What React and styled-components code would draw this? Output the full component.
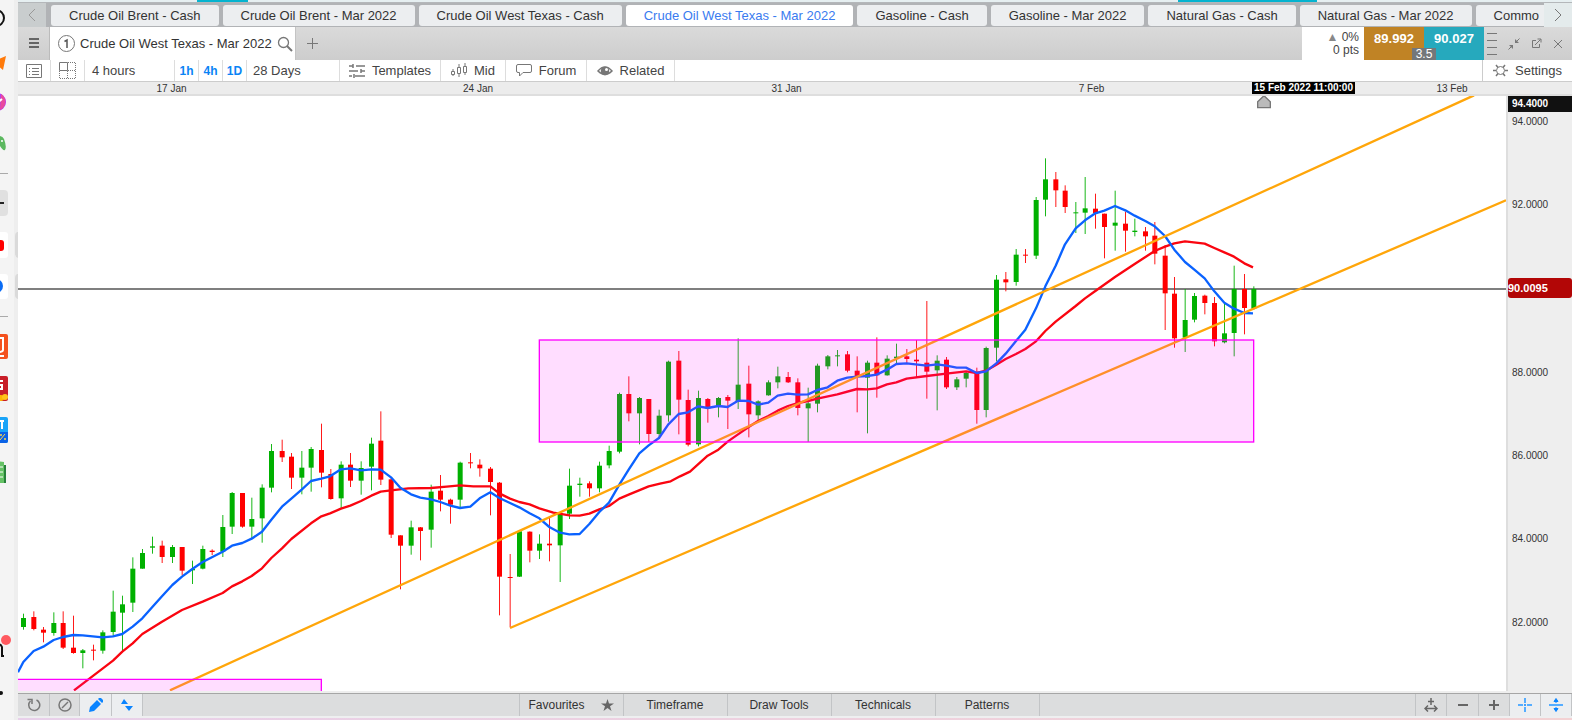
import React from "react";
import styled, { createGlobalStyle } from "styled-components";

const Global = createGlobalStyle`
  * { box-sizing: border-box; }
  body { margin: 0; background: #eeeeee; font-family: "Liberation Sans", Arial, sans-serif; font-size: 13px; color: #333; }
  button { font: inherit; color: inherit; border: 0; padding: 0; background: none; cursor: pointer; }
`;

const Page = styled.div`
  display: flex;
  min-height: 100vh;
  overflow: hidden;
`;

const Dock = styled.nav`
  flex: none;
  display: flex;
  flex-direction: column;
  width: 18px;
  background: #f4f4f4;
  border-right: 4px solid #eeeeee;
`;
const DockItem = styled.button`
  display: block;
  flex: none;
  width: 18px;
  height: ${(p) => p.$h}px;
  svg { display: block; overflow: visible; }
`;
const DockRule = styled.hr`
  flex: none;
  width: 8px;
  height: 1px;
  margin: 16px 0;
  border: 0;
  background: #aaa;
`;
const DockSpace = styled.div`
  flex: 1;
`;

const Main = styled.main`
  flex: 1;
  min-width: 0;
  display: flex;
  flex-direction: column;
`;
const TopStrip = styled.div`
  display: grid;
  grid-template-columns: 179fr 51fr 930fr 139fr 255fr;
  height: 3px;
  background: #e6eff1;
  border-bottom: 1px solid #b4b7ba;
`;
const Accent = styled.span`
  grid-column: ${(p) => p.$col};
  height: 2px;
  background: #05b3cf;
`;
const BottomStrip = styled.div`
  height: 2px;
  background: linear-gradient(90deg, #e8d0ea, #f3d2d4);
`;

const TabBar = styled.div`
  display: flex;
  height: 24px;
  background: #b1b3b6;
`;
const Scroll = styled.button`
  flex: none;
  display: grid;
  place-items: center;
  width: 28px;
  background: ${(p) => p.$bg};
`;
const Tabs = styled.div`
  flex: 1;
  min-width: 0;
  overflow: hidden;
  display: flex;
  gap: 4px;
  padding: 2px 0 1px 5px;
`;
const Tab = styled.button`
  flex: none;
  padding: 0 18px;
  border-radius: 3px;
  white-space: nowrap;
  color: ${(p) => (p.$active ? "#3a7bf0" : "#333")};
  background: ${(p) => (p.$active ? "#fff" : "#eceef0")};
`;

const TitleBar = styled.header`
  display: flex;
  height: 33px;
  background: linear-gradient(#dadada, #cdcdcd);
`;
const Menu = styled.button`
  display: grid;
  place-items: center;
  width: 32px;
  border-right: 1px solid #bbb;
`;
const ChartTab = styled.div`
  display: flex;
  align-items: center;
  gap: 5px;
  width: 246px;
  padding-left: 8px;
  background: #fff;
  border-right: 1px solid #c4c4c4;
  white-space: nowrap;
  svg { flex: none; }
`;
const AddTab = styled.button`
  display: grid;
  place-items: center;
  width: 32px;
`;
const Grow = styled.div`
  flex: 1;
`;
const Change = styled.div`
  width: 62px;
  padding: 4px 5px 0 0;
  background: #fff;
  font-size: 12px;
  line-height: 13px;
  text-align: right;
  color: #444;
`;
const Up = styled.span`
  color: #888;
`;
const Prices = styled.div`
  position: relative;
  display: flex;
`;
const Price = styled.button`
  width: 60px;
  padding-bottom: 10px;
  color: #fff;
  font-weight: bold;
  background: ${(p) => p.$bg};
`;
const Spread = styled.span`
  position: absolute;
  left: 50%;
  bottom: 0;
  width: 24px;
  margin-left: -12px;
  background: #73777a;
  color: #fff;
  font-size: 12px;
  line-height: 12px;
  text-align: center;
`;
const WindowTools = styled.div`
  display: flex;
  align-items: center;
  justify-content: space-between;
  width: 88px;
  padding: 0 9px 0 3px;
  button, svg { display: block; }
`;

const Toolbar = styled.div`
  display: flex;
  height: 22px;
  background: #fff;
  border-bottom: 1px solid #ccc;
`;
const Tool = styled.button`
  display: flex;
  align-items: center;
  justify-content: ${(p) => p.$justify || "center"};
  gap: 7px;
  width: ${(p) => p.$w}px;
  padding-left: ${(p) => p.$pad || 0}px;
  border-right: 1px solid #ddd;
  color: ${(p) => (p.$quick ? "#0a84f5" : "#444")};
  font-weight: ${(p) => (p.$quick ? "bold" : "normal")};
  font-size: ${(p) => (p.$quick ? 12 : 13)}px;
  white-space: nowrap;
  svg { flex: none; }
`;
const SettingsTool = styled(Tool)`
  border-right: 0;
  border-left: 1px solid #ccc;
`;

const DateAxis = styled.div`
  display: grid;
  grid-template-columns: 307fr 306fr 311fr 299fr 125fr 172fr 34fr;
  height: 14px;
  background: #ececec;
  border-bottom: 2px solid #dedede;
  font-size: 10px;
  line-height: 14px;
  text-align: center;
`;
const CursorDate = styled.span`
  justify-self: center;
  padding: 0 2px;
  background: #000;
  color: #fff;
  font-weight: bold;
  line-height: 11px;
  height: 12px;
  white-space: nowrap;
`;

const ChartRow = styled.div`
  flex: 1;
  display: flex;
  min-height: 594px;
  border-bottom: 2px solid #eee;
`;
const Plot = styled.div`
  position: relative;
  flex: 1;
  min-width: 0;
  background: #fff;
`;
const Drawing = styled.svg`
  position: absolute;
  inset: 0;
  width: 100%;
  height: 100%;
`;
const PriceAxis = styled.div`
  position: relative;
  width: 66px;
  border-left: 2px solid #dedede;
  background: #eee;
  font-size: 10px;
  color: #333;
`;
const Level = styled.span`
  position: absolute;
  left: 0;
  right: 0;
  top: ${(p) => p.$top}%;
  padding-left: 4px;
  line-height: 12px;
  transform: translateY(-50%);
`;
const Flag = styled(Level)`
  padding-left: ${(p) => p.$pad}px;
  border-radius: ${(p) => p.$radius || 0}px;
  background: ${(p) => p.$bg};
  color: #fff;
  font-weight: bold;
  font-size: ${(p) => p.$size}px;
  line-height: ${(p) => p.$h}px;
`;

const BottomBar = styled.footer`
  display: flex;
  height: 25px;
  background: #dcddde;
  border-top: 1px solid #a6a6a6;
  border-bottom: 2px solid #eeeff0;
`;
const BarButton = styled.button`
  display: flex;
  align-items: center;
  justify-content: center;
  gap: 16px;
  width: ${(p) => p.$w}px;
  border-right: 1px solid #c2c4c6;
  background: ${(p) => (p.$on ? "#eceef0" : "transparent")};
  font-size: 12px;
`;
const Panels = styled.div`
  display: flex;
  border-left: 1px solid #c2c4c6;
`;

/* Bars are [x, high, bodyTop, bodyBottom, low, rising]; each block has its own origin. */
const blocks = [
  { x: 0, y: 1200, bars: [
    [70,642,655,682,690,1],[101,635,652,688,692,0],[130,682,690,699,728,0],[161,638,670,700,708,1],[189,635,670,744,748,0],[220,648,744,760,762,0],[248,748,752,760,806,1],[280,735,750,753,782,0],[308,692,698,753,762,1],[339,573,636,697,708,1],[367,588,614,639,755,1],[398,473,507,609,637,1],[427,448,460,507,507,1],[457,411,440,444,462,1],[486,423,438,472,490,0],[517,436,442,472,490,1],[546,442,442,513,526,0],[577,483,508,512,553,1],[608,438,448,507,509,1],[636,449,453,457,466,0],[668,346,382,456,472,1],[696,277,280,381,403,1],[727,280,280,381,384,0],[755,294,358,381,416,1],[786,254,264,356,429,1],[814,133,154,264,278,1],[846,120,154,173,187,0],[874,160,171,234,268,0],[905,154,204,234,284,1],[933,142,148,204,276,1],[964,72,151,219,263,0],[992,208,223,298,300,0] ] },
  { x: 960, y: 1140, bars: [
    [63,245,255,356,386,1],[91,220,255,303,322,0],[123,245,265,303,345,1],[154,174,192,261,332,1],[182,95,183,300,316,0],[213,293,299,465,475,0],[241,467,467,498,629,0],[273,423,443,498,525,1],[301,442,443,454,542,0],[333,315,336,450,504,1],[361,286,333,360,395,0],[391,357,360,375,432,0],[420,246,249,360,386,1],[451,220,248,251,266,0],[479,239,255,266,291,0],[511,262,267,307,407,0],[538,307,309,591,707,0],[570,523,592,595,742,0],[598,455,455,591,592,1],[629,455,456,513,548,0],[658,464,492,513,538,1],[688,414,492,497,545,0],[720,400,402,497,607,1],[748,267,318,402,418,1],[779,294,312,316,351,1],[808,305,311,326,351,0],[838,246,258,326,338,1],[867,198,214,257,266,1] ] },
  { x: 1800, y: 900, bars: [
    [58,279,283,456,461,1],[86,230,283,341,365,0],[118,292,295,341,434,1],[146,298,298,403,427,0],[177,330,348,403,416,1],[205,183,186,347,366,1],[236,154,183,300,404,0],[264,270,301,435,440,0],[295,273,295,434,440,1],[323,295,298,326,369,0],[355,292,295,322,353,1],[383,286,292,303,388,0],[414,116,255,305,328,1],[446,198,252,344,413,0],[474,302,305,347,362,1],[505,242,248,287,288,1],[533,201,230,248,266,1],[564,217,232,248,250,0],[593,236,248,325,347,0],[624,264,311,326,427,1],[652,192,198,312,338,1],[683,166,170,200,209,1],[712,151,167,170,200,1],[742,154,164,213,218,0],[771,170,213,230,338,0],[802,183,189,234,401,1],[830,113,189,227,294,0],[861,167,177,227,228,1],[889,132,171,176,190,1],[920,148,170,178,190,0],[949,121,180,185,234,0],[980,4,189,216,297,0] ] },
  { x: 2700, y: 420, bars: [
    [111,647,663,692,812,1],[139,652,660,743,748,0],[170,712,719,743,751,1],[198,697,700,717,743,1],[230,684,700,811,852,0],[258,621,625,811,833,1],[289,406,420,624,665,1],[317,397,419,428,455,0],[348,328,345,427,438,1],[376,328,345,348,370,0],[408,172,181,348,358,1],[436,56,119,180,230,1],[467,97,119,152,202,0],[495,137,153,202,220,0],[527,187,218,221,280,1],[555,112,206,219,283,1],[586,162,207,220,267,0],[613,222,222,262,356,0],[645,153,249,258,333,1],[676,216,252,273,336,0],[704,237,273,277,290,1],[736,262,275,290,333,0],[764,247,288,342,374,0],[795,316,348,461,571,0],[823,412,462,596,624,0],[855,448,541,594,637,1],[883,460,469,540,548,1],[914,465,468,490,524,0],[943,472,490,605,620,0],[973,490,581,608,611,1],[1002,378,448,580,650,1],[1033,403,448,505,584,0],[1061,440,448,507,510,1] ] },
];

const fast = [
  [0, 1200, "54,818 70,787 101,754 130,741 161,721 189,712 220,706 248,707 308,713 339,710 367,703 398,681 427,656 457,622 486,590 517,556 546,531 577,508 608,487 668,456 696,438 727,430 755,417 786,396 814,360 846,321 874,297 905,270 933,244 964,237"],
  [960, 1140, "30,290 63,269 91,266 123,272 154,269 182,270 213,293 241,324 273,344 301,354 333,359 361,367 391,378 420,385 451,381 479,356 511,338 538,355 570,370 598,383 629,401 658,416 688,442 720,459 748,464 779,463 808,433 838,397 867,369 898,315"],
  [1800, 900, "86,510 118,461 146,437 177,415 205,374 236,343 264,338 295,320 323,325 355,319 383,322 414,303 446,304 474,315 505,309 533,288 564,282 593,285 624,284 652,271 683,263 712,243 742,234 771,231 802,229 830,225 861,210 889,193"],
  [2700, 420, "20,671 80,678 111,674 139,678 170,684 198,684 230,700 258,695 289,671 317,642 348,604 376,570 408,506 436,440 467,378 495,314 527,266 555,242 586,221 613,213 645,199 676,212 704,228 736,244 764,260 795,289 823,330 855,367 883,390 914,416 943,455 973,489 1002,507 1033,520 1059,521"],
];
const slow = [
  [0, 1200, "222,872 339,783 367,756 398,731 427,703 486,666 546,631 608,606 668,580 696,560 727,545 755,529 786,506 814,475 846,446 874,418 933,371 962,351"],
  [960, 1140, "30,401 63,387 91,378 123,364 154,348 182,336 213,332 265,326 333,325 380,321 420,317 460,320 511,320 538,341 570,357 598,367 629,374 658,386 700,399 748,407 779,408 808,402 838,389 867,379 898,357 926,345 957,332 986,320 1020,312"],
  [1800, 900, "212,545 240,530 270,516 323,468 355,450 383,426 414,404 446,382 474,364 505,349 533,333 564,319 593,310 624,304 652,297 712,284 771,268 802,269 830,266 861,254 889,248"],
  [2700, 420, "20,717 80,709 139,702 198,695 230,700 258,693 289,675 317,658 348,643 376,628 408,605 436,574 467,546 527,499 555,476 586,454 645,412 704,373 764,334 795,321 823,311 855,305 914,312 943,325 973,338 1002,351 1033,371 1059,383"],
];
const join = (parts) =>
  parts
    .flatMap(([ox, oy, pts]) => pts.split(" ").map((p) => p.split(",")).map(([x, y]) => `${+x + ox},${+y + oy}`))
    .join(" ");

function Chart() {
  return (
    <Drawing viewBox="54 289 4464 1785" preserveAspectRatio="none" role="img" aria-label="Crude Oil West Texas candlestick chart">
      <line x1="54" x2="4518" y1="868" y2="868" stroke="#555" strokeWidth="4" />
      {blocks.map((b) => (
        <g key={b.x} transform={`translate(${b.x} ${b.y})`}>
          {b.bars.map(([x, hi, top, bottom, lo, up]) => (
            <g key={x} fill={up ? "#00b000" : "#ff0000"}>
              <rect x={x - 1} y={hi} width="3" height={lo - hi} opacity="0.9" />
              <rect x={x - 7} y={top} width="15" height={bottom - top} />
            </g>
          ))}
        </g>
      ))}
      <g fill="none" strokeLinejoin="round">
        <polyline points={join(slow)} stroke="#fa0510" strokeWidth="7" />
        <polyline points={join(fast)} stroke="#0a62ff" strokeWidth="7" />
        <path d="M510 2072L4422 287M1530 1885L4518 602" stroke="#ffa60a" strokeWidth="7" />
      </g>
      <g fill="#f0f" fillOpacity="0.133" stroke="#f0f" strokeWidth="4">
        <rect x="1618" y="1021" width="2143" height="306" />
        <path d="M50 2039H964V2080H50Z" />
      </g>
      <path d="M3773 306L3792 288L3811 306V324H3773Z" fill="#bbb" stroke="#777" strokeWidth="4" />
    </Drawing>
  );
}

const Icon = ({ w = 16, h = 16, sw = 1, color = "#777", fill = "none", children }) => (
  <svg width={w} height={h} viewBox={`0 0 ${w} ${h}`} fill={fill} stroke={color} strokeWidth={sw} aria-hidden="true">
    {children}
  </svg>
);

function Sidebar() {
  return (
    <Dock>
      <DockItem $h={38} aria-label="Search"><svg width="18" height="38"><circle cx="-4" cy="18" r="8" fill="none" stroke="#111" strokeWidth="2" /></svg></DockItem>
      <DockItem $h={48} aria-label="Pointer"><svg width="18" height="48"><path d="M-8 24L6 18L3 32L-2 28Z" fill="#ff7a0a" /></svg></DockItem>
      <DockItem $h={34} aria-label="Messenger"><svg width="18" height="34"><circle cx="-3" cy="16" r="9" fill="#b33cf5" /><path d="M1 8A9 9 0 0 1 0 24Z" fill="#e84a9e" /><path d="M-4 18L2 13" stroke="#fff" strokeWidth="2" /></svg></DockItem>
      <DockItem $h={37} aria-label="Games"><svg width="18" height="37"><path d="M-6 17Q2 14 4 19Q7 27 5 30Q3 31 0 26H-6Z" fill="#5cb860" /><circle cx="2" cy="21" r="1" fill="#fff" /></svg></DockItem>
      <DockRule />
      <DockItem $h={26} aria-label="Collapse"><svg width="18" height="26"><rect x="-8" width="16" height="26" rx="4" fill="#e0e0e0" /><path d="M-4 13H4" stroke="#222" strokeWidth="2" /></svg></DockItem>
      <DockItem $h={42} aria-label="Video"><svg width="18" height="42"><rect x="-8" y="16" width="16" height="26" rx="3" fill="#fff" /><rect x="-8" y="24" width="12" height="11" rx="3" fill="#f00" /><path d="M18 16H17Q15 17 15 20V37Q15 41 18 42Z" fill="#dadada" /></svg></DockItem>
      <DockItem $h={42} aria-label="Chat"><svg width="18" height="42"><rect x="-8" y="16" width="16" height="25" rx="3" fill="#fff" /><circle cx="-4" cy="28" r="7" fill="#0a6cf5" /><path d="M18 16H17Q15 17 15 20V37Q15 40 18 41Z" fill="#dadada" /></svg></DockItem>
      <DockRule />
      <DockItem $h={27} aria-label="Notes"><svg width="18" height="27"><rect x="-8" y="1" width="16" height="25" rx="2" fill="#f4511e" /><path d="M-2 5H3V17Q3 19 -2 19M-4 23H4" stroke="#fff" strokeWidth="2" fill="none" /></svg></DockItem>
      <DockItem $h={42} aria-label="Rewards"><svg width="18" height="42"><rect x="-8" y="16" width="16" height="25" rx="2" fill="#c81e28" /><path d="M3 21H0M0 25H2V29H-2" stroke="#fff" strokeWidth="2" fill="none" /><circle cx="1" cy="38" r="3" fill="#ffb400" /><circle cx="5" cy="37" r="3" fill="#ffc21a" /></svg></DockItem>
      <DockItem $h={42} aria-label="Deals"><svg width="18" height="42"><rect x="-8" y="15" width="16" height="26" rx="2" fill="#1aa4f8" /><path d="M-8 30H8V39Q8 41 6 41H-8Z" fill="#0a62e6" /><path d="M2 20V27M-2 19H4" stroke="#fff" strokeWidth="2" /><path d="M0 38L5 32" stroke="#ffd84a" /><circle cx="1" cy="33" r="1" fill="#ffd84a" /><circle cx="5" cy="37" r="1" fill="#ffd84a" /></svg></DockItem>
      <DockItem $h={40} aria-label="News"><svg width="18" height="40"><path d="M-6 17L4 18V39H-6Z" fill="#66c266" /><rect x="4" y="21" width="2" height="18" fill="#27803a" /><path d="M-3 23H3M-3 28H3M-3 33H3" stroke="#fff" /></svg></DockItem>
      <DockSpace />
      <DockItem $h={50} aria-label="Notifications"><svg width="18" height="50"><path d="M-6 16Q0 12 2 17V26H4" fill="none" stroke="#111" strokeWidth="2" /><circle cx="6" cy="10" r="5" fill="#ff5a60" /></svg></DockItem>
      <DockItem $h={40} aria-label="More"><svg width="18" height="40"><circle cx="1" cy="13" r="2" fill="#111" /></svg></DockItem>
    </Dock>
  );
}

const tabs = ["Crude Oil Brent - Cash", "Crude Oil Brent - Mar 2022", "Crude Oil West Texas - Cash", "Crude Oil West Texas - Mar 2022", "Gasoline - Cash", "Gasoline - Mar 2022", "Natural Gas - Cash", "Natural Gas - Mar 2022", "Commo"];
const levels = [["94.0000", 4.4], ["92.0000", 18.4], ["88.0000", 46.5], ["86.0000", 60.5], ["84.0000", 74.5], ["82.0000", 88.5]];

export default function App() {
  return (
    <Page>
      <Global />
      <Sidebar />
      <Main>
        <TopStrip><Accent $col={2} /><Accent $col={4} /></TopStrip>
        <TabBar>
          <Scroll $bg="#c9cdce" aria-label="Previous tabs"><Icon w={8} h={14} color="#999"><path d="M7 1L1 7L7 13" /></Icon></Scroll>
          <Tabs>{tabs.map((t, i) => <Tab key={t} $active={i === 3}>{t}</Tab>)}</Tabs>
          <Scroll $bg="#e4ebec" aria-label="Next tabs"><Icon w={8} h={14}><path d="M1 1L7 7L1 13" /></Icon></Scroll>
        </TabBar>
        <TitleBar>
          <Menu aria-label="Menu"><Icon w={10} h={11} sw={2} color="#666"><path d="M0 1H10M0 5H10M0 9H10" /></Icon></Menu>
          <ChartTab>
            <Icon w={17} h={17}><circle cx="8.500" cy="8.500" r="8" /><path d="M6.500 6.500L9 5V13" stroke="#555" strokeWidth="1.500" /></Icon>
            Crude Oil West Texas - Mar 2022
            <Icon w={16} h={16}><circle cx="6.500" cy="6.500" r="5" strokeWidth="1.300" /><path d="M10 10L15 15" strokeWidth="2" /></Icon>
          </ChartTab>
          <AddTab aria-label="Add chart"><Icon w={11} h={11}><path d="M5.500 0V11M0 5.500H11" /></Icon></AddTab>
          <Grow />
          <Change><Up>▲</Up> 0%<br />0 pts</Change>
          <Prices>
            <Price $bg="#c08325">89.992</Price>
            <Price $bg="#26a9bd">90.027</Price>
            <Spread>3.5</Spread>
          </Prices>
          <WindowTools>
            <Icon w={10} h={28}><path d="M0 3.500H10M0 10.500H10M0 17.500H10M0 24.500H10" /></Icon>
            <button aria-label="Shrink"><Icon w={12} h={12}><path d="M11.500 .5L8 4M.5 11.500L4 8" /><path d="M7 1V5H11ZM5 11V7H1Z" fill="#777" stroke="none" /></Icon></button>
            <button aria-label="Pop out"><Icon w={11} h={11}><path d="M5 2.500H1.500V9.500H8.500V6M4 7L9.500 1.500M6.500 1H10V4.500" /></Icon></button>
            <button aria-label="Close"><Icon w={10} h={10}><path d="M1 1L9 9M9 1L1 9" /></Icon></button>
          </WindowTools>
        </TitleBar>
        <Toolbar>
          <Tool $w={33} aria-label="List"><Icon w={16} h={14}><path d="M.5 .5H15.500V13.500H.5ZM3 4.500H4M3 7.500H4M3 10.500H4M6 4.500H13M6 7.500H13M6 10.500H13" /></Icon></Tool>
          <Tool $w={34} aria-label="Layout"><Icon w={17} h={17}><path d="M.5 .5H8.500V8.500H.5Z" /><path d="M9 .5H16.500V16.500H.5V9M8.500 9V16M9 8.500H16" strokeDasharray="1 1" /></Icon></Tool>
          <Tool $w={90} $justify="flex-start" $pad={7}>4 hours</Tool>
          <Tool $w={24} $quick>1h</Tool>
          <Tool $w={24} $quick>4h</Tool>
          <Tool $w={24} $quick>1D</Tool>
          <Tool $w={93} $justify="flex-start" $pad={6}>28 Days</Tool>
          <Tool $w={101}><Icon w={16} h={14} sw={1.5}><path d="M0 2H4M7 2H16M0 7H9M12 7H16M0 12H3M6 12H16M4 0V4M12 5V9M5 10V14" /></Icon>Templates</Tool>
          <Tool $w={65}><Icon w={16} h={15}><path d="M.5 8.500H3.500V11.500H.5ZM6.500 4.500H9.500V10.500H6.500ZM12.500 3.500H15.500V9.500H12.500ZM2 6V8M2 12V13M8 1V4M8 11V14M14 0V3M14 10V12" /></Icon>Mid</Tool>
          <Tool $w={81}><Icon w={16} h={13}><path d="M2 .5H14Q15.500 .5 15.500 2V7Q15.500 8.500 14 8.500H7L3.500 12V8.500H2Q.5 8.500 .5 7V2Q.5 .5 2 .5" /></Icon>Forum</Tool>
          <Tool $w={88}><Icon w={16} h={10} sw={1.5}><path d="M1 5Q8 -3 15 5Q8 12 1 5Z" /><circle cx="8" cy="5" r="3.500" fill="#777" /><circle cx="9.500" cy="3.500" r="1.500" fill="#fff" stroke="none" /></Icon>Related</Tool>
          <Grow />
          <SettingsTool $w={90}><Icon w={15} h={15} sw={1}><circle cx="7.500" cy="7.500" r="4" /><path d="M0 7.500H3M12 7.500H15M3 2L5 4.500M12 2L10 4.500M3 13L5 10.500M12 13L10 10.500" strokeWidth="1.500" /></Icon>Settings</SettingsTool>
        </Toolbar>
        <DateAxis>
          <span>17 Jan</span><span>24 Jan</span><span>31 Jan</span><span>7 Feb</span><CursorDate>15 Feb 2022 11:00:00</CursorDate><span>13 Feb</span>
        </DateAxis>
        <ChartRow>
          <Plot><Chart /></Plot>
          <PriceAxis>
            {levels.map(([t, y]) => <Level key={t} $top={y}>{t}</Level>)}
            <Flag $top={1.4} $bg="#111" $size={10} $h={16} $pad={4}>94.4000</Flag>
            <Flag $top={32.3} $bg="#b20606" $size={11} $h={20} $pad={0} $radius={3}>90.0095</Flag>
          </PriceAxis>
        </ChartRow>
        <BottomBar>
          <BarButton $w={32} aria-label="Reset"><Icon w={14} h={14} sw={1.5}><path d="M9.500 2A5.500 5.500 0 1 1 3.500 3M.5 1.500H5V6" /></Icon></BarButton>
          <BarButton $w={30} aria-label="Clear"><Icon w={14} h={14} sw={1.5}><circle cx="7" cy="7" r="6" /><path d="M4 10L10 4" /></Icon></BarButton>
          <BarButton $w={32} $on aria-label="Draw"><Icon w={14} h={14} color="none" fill="#0a84ff"><path d="M0 14L1 9L8 2L12 6L5 13ZM9 1L10 0H12L14 2V4L13 5Z" /></Icon></BarButton>
          <BarButton $w={31} $on aria-label="Sort"><Icon w={12} h={12} color="none" fill="#0a84ff"><path d="M0 5L3 0L7 5ZM4 7H12L8 12Z" /></Icon></BarButton>
          <Grow />
          <Panels>
            <BarButton $w={104}>Favourites<Icon w={13} h={12} color="none" fill="#666"><path d="M6.500 0L8 4.500H13L9 7.300L10.500 12L6.500 9L2.500 12L4 7.300L0 4.500H5Z" /></Icon></BarButton>
            <BarButton $w={104}>Timeframe</BarButton>
            <BarButton $w={104}>Draw Tools</BarButton>
            <BarButton $w={104}>Technicals</BarButton>
            <BarButton $w={104}>Patterns</BarButton>
          </Panels>
          <Grow />
          <Panels>
            <BarButton $w={31} aria-label="Fit"><Icon w={14} h={14} sw={1.5} color="#666"><path d="M7 0V7M4 3.500H10M1 10.500H13M4 7.500L1 10.500L4 13.500M10 7.500L13 10.500L10 13.500" /></Icon></BarButton>
            <BarButton $w={32} aria-label="Zoom out"><Icon w={10} h={10} sw={2} color="#666"><path d="M0 5H10" /></Icon></BarButton>
            <BarButton $w={31} aria-label="Zoom in"><Icon w={10} h={10} sw={2} color="#666"><path d="M0 5H10M5 0V10" /></Icon></BarButton>
            <BarButton $w={31} $on aria-label="Crosshair"><Icon w={14} h={14} sw={2} color="#55adff"><path d="M7 0V5M7 9V14M0 7H5M9 7H14" /><circle cx="7" cy="7" r="1" fill="#0a84ff" stroke="none" /></Icon></BarButton>
            <BarButton $w={31} $on aria-label="Fit height"><Icon w={14} h={14} color="#0a84ff" fill="#0a84ff"><path d="M0 7H14" strokeWidth="2" stroke="#55adff" /><path d="M7 2V5M7 9V12M5 3.500L7 .5L9 3.500ZM5 10.500L7 13.500L9 10.500Z" /></Icon></BarButton>
          </Panels>
        </BottomBar>
        <BottomStrip />
      </Main>
    </Page>
  );
}
